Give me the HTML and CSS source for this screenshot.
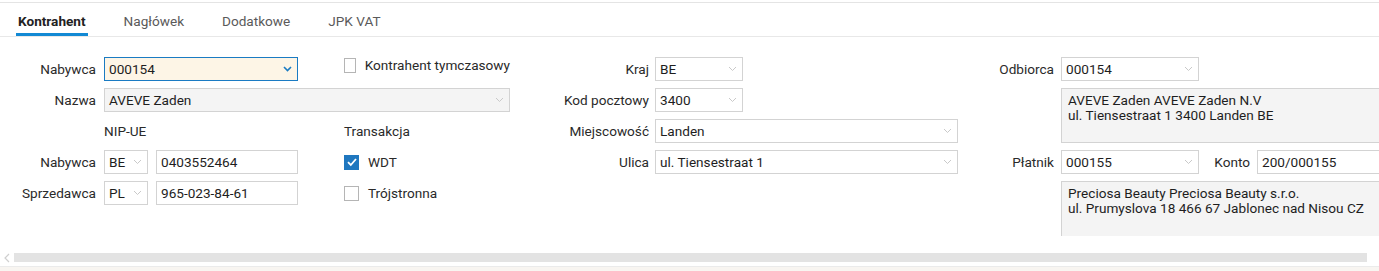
FILE: index.html
```html
<!DOCTYPE html>
<html lang="pl">
<head>
  <meta charset="UTF-8" />
  <title>Kontrahent</title>
  <link rel="stylesheet" href="styles.css">
</head>
<body>
  <nav class="tabs">
    <div class="tab active">Kontrahent</div>
    <div class="tab">Nagłówek</div>
    <div class="tab">Dodatkowe</div>
    <div class="tab">JPK VAT</div>
  </nav>

  <div class="viewport">
    <div class="form">
      <!-- row 1 -->
      <label class="lbl r1 c-lbl">Nabywca</label>
      <div class="field combo focus r1 c-buyer">000154
        <svg class="chev" width="9" height="6" viewBox="0 0 9 6"><polyline points="1,1 4.5,4.5 8,1" /></svg>
      </div>
      <div class="check r1 c-check top"><span class="box"></span>Kontrahent tymczasowy</div>
      <label class="lbl r1 c-mlbl">Kraj</label>
      <div class="field combo r1 c-short">BE
        <svg class="chev" width="9" height="6" viewBox="0 0 9 6"><polyline points="1,1 4.5,4.5 8,1" /></svg>
      </div>
      <label class="lbl r1 c-rlbl">Odbiorca</label>
      <div class="field combo r1 c-rcode">000154
        <svg class="chev" width="9" height="6" viewBox="0 0 9 6"><polyline points="1,1 4.5,4.5 8,1" /></svg>
      </div>

      <!-- row 2 -->
      <label class="lbl r2 c-lbl">Nazwa</label>
      <div class="field combo disabled r2 c-name">AVEVE Zaden
        <svg class="chev" width="9" height="6" viewBox="0 0 9 6"><polyline points="1,1 4.5,4.5 8,1" /></svg>
      </div>
      <label class="lbl r2 c-mlbl">Kod pocztowy</label>
      <div class="field combo r2 c-short">3400
        <svg class="chev" width="9" height="6" viewBox="0 0 9 6"><polyline points="1,1 4.5,4.5 8,1" /></svg>
      </div>
      <div class="memo memo-1">AVEVE Zaden AVEVE Zaden N.V<br>ul. Tiensestraat 1 3400 Landen BE</div>

      <!-- row 3 -->
      <div class="caption r3 c-nip">NIP-UE</div>
      <div class="caption r3 c-check">Transakcja</div>
      <label class="lbl r3 c-mlbl">Miejscowość</label>
      <div class="field combo r3 c-long">Landen
        <svg class="chev" width="9" height="6" viewBox="0 0 9 6"><polyline points="1,1 4.5,4.5 8,1" /></svg>
      </div>

      <!-- row 4 -->
      <label class="lbl r4 c-lbl">Nabywca</label>
      <div class="field combo r4 c-cc">BE
        <svg class="chev" width="9" height="6" viewBox="0 0 9 6"><polyline points="1,1 4.5,4.5 8,1" /></svg>
      </div>
      <div class="field r4 c-nr">0403552464</div>
      <div class="check r4 c-check"><span class="box checked">
        <svg width="12" height="12" viewBox="0 0 12 12"><polyline points="2,6.2 4.8,9 10,3" /></svg>
      </span>WDT</div>
      <label class="lbl r4 c-mlbl">Ulica</label>
      <div class="field combo r4 c-long">ul. Tiensestraat 1
        <svg class="chev" width="9" height="6" viewBox="0 0 9 6"><polyline points="1,1 4.5,4.5 8,1" /></svg>
      </div>
      <label class="lbl r4 c-rlbl">Płatnik</label>
      <div class="field combo r4 c-rcode">000155
        <svg class="chev" width="9" height="6" viewBox="0 0 9 6"><polyline points="1,1 4.5,4.5 8,1" /></svg>
      </div>
      <label class="lbl r4 c-klbl">Konto</label>
      <div class="field r4 c-konto">200/000155</div>

      <!-- row 5 -->
      <label class="lbl r5 c-lbl">Sprzedawca</label>
      <div class="field combo r5 c-cc">PL
        <svg class="chev" width="9" height="6" viewBox="0 0 9 6"><polyline points="1,1 4.5,4.5 8,1" /></svg>
      </div>
      <div class="field r5 c-nr">965-023-84-61</div>
      <div class="check r5 c-check"><span class="box"></span>Trójstronna</div>
      <div class="memo memo-2">Preciosa Beauty Preciosa Beauty s.r.o.<br>ul. Prumyslova 18 466 67 Jablonec nad Nisou CZ</div>
    </div>
  </div>

  <div class="hscroll">
    <svg class="arrow" width="8" height="10" viewBox="0 0 8 10"><polyline points="6,1 2,5 6,9" /></svg>
    <div class="track"></div>
  </div>
  <div class="footer"></div>
</body>
</html>
```

FILE: styles.css
```css
body {
  font-family: Roboto, "Liberation Sans", sans-serif;
  font-size: 13.6px;
  color: #2a2a2a;
  background-color: #fff;
  margin: 0;
  overflow: hidden;
}

.tabs {
  display: flex;
  gap: 34px;
  margin-top: 2px;
  padding-left: 16px;
  border-top: 1px solid #e4e4e4;
  border-bottom: 1px solid #e8e8e8;
}

.tab {
  padding: 10px 2px 4px;
  line-height: 16px;
  color: #5a5a5a;
  border-bottom: 3px solid transparent;
}

.tab.active {
  color: #222;
  font-weight: bold;
  border-bottom-color: #1289d4;
}

.viewport {
  overflow: hidden;
  width: 1379px;
}

.form {
  display: grid;
  grid-template-columns: 96px 8px 44px 8px 142px 46px 166px 139px 6px 88px 215px 96px 7px 138px 58px 220px;
  grid-template-rows: repeat(6, 24px);
  row-gap: 7px;
  padding-top: 20px;
  width: max-content;
}

.r1 { grid-row: 1; }
.r2 { grid-row: 2; }
.r3 { grid-row: 3; }
.r4 { grid-row: 4; }
.r5 { grid-row: 5; }

.c-lbl { grid-column: 1 / 2; }
.c-buyer { grid-column: 3 / 6; }
.c-name { grid-column: 3 / 8; }
.c-nip { grid-column: 3 / 6; }
.c-cc { grid-column: 3 / 4; }
.c-nr { grid-column: 5 / 6; }
.c-check { grid-column: 7 / 8; }
.c-mlbl { grid-column: 8 / 9; }
.c-short { grid-column: 10 / 11; }
.c-long { grid-column: 10 / 12; }
.c-rlbl { grid-column: 12 / 13; }
.c-rcode { grid-column: 14 / 15; }
.c-klbl { grid-column: 15 / 16; padding-right: 7px; }
.c-konto { grid-column: 16 / 17; }

.lbl {
  line-height: 24px;
  text-align: right;
  white-space: nowrap;
}

.caption {
  line-height: 24px;
}

.field {
  position: relative;
  box-sizing: border-box;
  height: 24px;
  line-height: 22px;
  padding: 0 4px;
  border: 1px solid #d3d3d3;
  background-color: #fff;
  color: #1e1e1e;
  white-space: nowrap;
}

.field.disabled {
  background-color: #f4f4f4;
}

.field.focus {
  background-color: #fdf5e6;
  border-color: #1a7bc3;
}

.chev {
  position: absolute;
  right: 5px;
  top: 8px;
  fill: none;
  stroke: #c9c9c9;
  stroke-width: 1;
}

.field.focus .chev {
  stroke: #1a7bc3;
  stroke-width: 1.6;
}

.check {
  display: flex;
  align-items: center;
  gap: 9px;
  white-space: nowrap;
}

.check.top {
  align-items: flex-start;
  padding-top: 1px;
  line-height: 14px;
}

.box {
  box-sizing: border-box;
  width: 15px;
  height: 15px;
  border: 1px solid #b5b5b5;
  background-color: #fff;
  display: flex;
  align-items: center;
  justify-content: center;
}

.box.checked {
  background-color: #1f77bf;
  border-color: #1f77bf;
}

.box svg {
  fill: none;
  stroke: #fff;
  stroke-width: 1.8;
}

.memo {
  box-sizing: border-box;
  grid-column: 14 / 17;
  padding: 4px 6px;
  line-height: 15px;
  border: 1px solid #d3d3d3;
  background-color: #f4f4f4;
  color: #1e1e1e;
  white-space: nowrap;
}

.memo-1 {
  grid-row: 2 / 4;
}

.memo-2 {
  grid-row: 5 / 7;
  height: 56px;
}

.hscroll {
  display: flex;
  align-items: center;
  margin-top: 17px;
  height: 9px;
  padding-left: 3px;
}

.hscroll .arrow {
  fill: none;
  stroke: #cfcfcf;
  stroke-width: 1.2;
  margin-right: 3px;
}

.track {
  width: 1353px;
  height: 9px;
  background-color: #e3e3e3;
}

.footer {
  margin-top: 4px;
  height: 4px;
  border-top: 1px solid #ebebeb;
  background-color: #f8f5f1;
}
```
